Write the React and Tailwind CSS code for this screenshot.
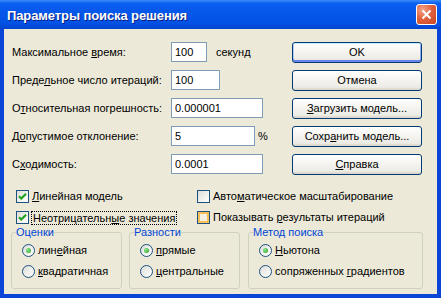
import React from 'react';

const U = ({ children }) => <span className="underline">{children}</span>;

const rows = [
    { label: <>Максимальное <U>в</U>ремя:</>, value: '100', inputCls: 'w-[36px]', after: 'секунд', afterCls: 'ml-[9px]', button: 'OK', isDefault: true },
    { label: <>Преде<U>л</U>ьное число итераций:</>, value: '100', inputCls: 'w-[49px]', button: 'Отмена' },
    { label: <>О<U>т</U>носительная погрешность:</>, value: '0.000001', inputCls: 'w-[92px]', button: <><U>З</U>агрузить модель...</> },
    { label: <>Д<U>о</U>пустимое отклонение:</>, value: '5', inputCls: 'w-[84px]', after: '%', afterCls: 'ml-[3px]', button: <>Сохр<U>а</U>нить модель...</> },
    { label: <>С<U>х</U>одимость:</>, value: '0.0001', inputCls: 'w-[92px]', button: <><U>С</U>правка</> },
];

function CheckBox({ checked, hover }) {
    return (
        <span
            className={`flex h-[13px] w-[13px] shrink-0 items-center justify-center border border-[#1c5180] ${
                hover
                    ? 'bg-[#f3efe2] shadow-[inset_0_0_0_2px_#f8be58]'
                    : 'bg-[linear-gradient(135deg,#dcdcd7_0%,#f2f2ef_60%,#ffffff_100%)]'
            }`}
        >
            {checked && (
                <svg width="11" height="11" viewBox="0 0 11 11">
                    <path d="M2 5.2 L4.3 7.5 L9 2.8" fill="none" stroke="#21a121" strokeWidth="2.2" />
                </svg>
            )}
        </span>
    );
}

function Radio({ checked }) {
    return (
        <span className="flex h-[13px] w-[13px] shrink-0 items-center justify-center rounded-full border border-[#1c5180] bg-[linear-gradient(135deg,#dcdcd7_0%,#f2f2ef_60%,#ffffff_100%)]">
            {checked && <span className="h-[5px] w-[5px] rounded-full bg-[radial-gradient(circle_at_35%_35%,#8fe48f,#21a121)]" />}
        </span>
    );
}

function Group({ title, className, items }) {
    return (
        <fieldset className={`h-[63px] rounded-[3px] border border-[#d0d0bf] px-[4px] pt-[2px] ${className}`}>
            <legend className="px-0 leading-[12px] text-[#0046d5]">{title}</legend>
            <div className="flex flex-col pl-[6px]">
                {items.map((it, i) => (
                    <div key={i} className="flex h-[21px] items-center gap-[3px]">
                        <Radio checked={i === 0} />
                        <span>{it}</span>
                    </div>
                ))}
            </div>
        </fieldset>
    );
}

export default function App() {
    return (
        <div className="flex h-[298px] w-[441px] flex-col font-['Liberation_Sans',Arial,sans-serif] text-[11px] leading-[13px] text-black">
            {/* title bar */}
            <div className="flex h-[29px] shrink-0 items-center justify-between bg-[linear-gradient(to_bottom,#3a8cf7_0%,#0a5ef0_12%,#0557ea_45%,#0352e4_80%,#0443cf_100%)] pl-[7px] pr-[4px]">
                <span className="mt-[1px] text-[13px] font-bold tracking-[-0.1px] text-white [text-shadow:1px_1px_0_#0a1d80]">
                    Параметры поиска решения
                </span>
                <span className="flex h-[21px] w-[21px] items-center justify-center rounded-[3px] border border-white bg-[radial-gradient(circle_at_30%_25%,#f2a48a_0%,#e26341_45%,#c8441d_100%)]">
                    <svg width="11" height="11" viewBox="0 0 11 11">
                        <path d="M1.5 1.5 L9.5 9.5 M9.5 1.5 L1.5 9.5" stroke="#fff" strokeWidth="2" />
                    </svg>
                </span>
            </div>

            {/* body */}
            <div className="flex flex-1 flex-col border-x-4 border-b-4 border-[#0a45d8] bg-[#ece9d8] pl-[7px] pt-[13px]">
                <div className="flex flex-col gap-[8px]">
                    {rows.map((r, i) => (
                        <div key={i} className="flex h-[20px] items-center">
                            <span className="ml-[1px] w-[159px]">{r.label}</span>
                            <div className="flex w-[121px] items-center">
                                <div className={`flex h-[20px] items-center border border-[#7f9db9] bg-white pl-[3px] ${r.inputCls}`}>
                                    {r.value}
                                </div>
                                {r.after && <span className={r.afterCls}>{r.after}</span>}
                            </div>
                            <button
                                className={`flex h-[21px] w-[130px] items-center justify-center rounded-[3px] border border-[#003c74] bg-[linear-gradient(to_bottom,#ffffff_0%,#f5f4f0_45%,#ecebe6_85%,#d6d0c5_100%)] ${
                                    r.isDefault
                                        ? 'shadow-[inset_0_1px_0_#cee7ff,inset_0_-2px_0_#6982ee,inset_1px_0_0_#b4cdf7,inset_-1px_0_0_#8daef2]'
                                        : ''
                                }`}
                            >
                                {r.button}
                            </button>
                        </div>
                    ))}
                </div>

                {/* checkboxes */}
                <div className="mt-[12px] flex flex-col">
                    <div className="flex h-[21px] items-center">
                        <div className="ml-[5px] flex w-[181px] items-center gap-[3px]">
                            <CheckBox checked />
                            <span><U>Л</U>инейная модель</span>
                        </div>
                        <div className="flex items-center gap-[3px]">
                            <CheckBox />
                            <span>Авто<U>м</U>атическое масштабирование</span>
                        </div>
                    </div>
                    <div className="flex h-[21px] items-center">
                        <div className="ml-[5px] flex w-[181px] items-center gap-[2px]">
                            <CheckBox checked />
                            <span className="border border-dotted border-black px-[1px] leading-[12px]">
                                Неотрицательн<U>ы</U>е значения
                            </span>
                        </div>
                        <div className="flex items-center gap-[3px]">
                            <CheckBox hover />
                            <span>Показывать <U>р</U>езультаты итераций</span>
                        </div>
                    </div>
                </div>

                {/* groups */}
                <div className="mt-[-2px] flex">
                    <Group title="Оценки" className="w-[111px]" items={[<>лин<U>е</U>йная</>, <><U>к</U>вадратичная</>]} />
                    <Group title="Разности" className="ml-[7px] w-[111px]" items={[<><U>п</U>рямые</>, <><U>ц</U>ентральные</>]} />
                    <Group title="Метод поиска" className="ml-[8px] w-[175px]" items={[<><U>Н</U>ьютона</>, <>сопряженных <U>г</U>радиентов</>]} />
                </div>
            </div>
        </div>
    );
}
